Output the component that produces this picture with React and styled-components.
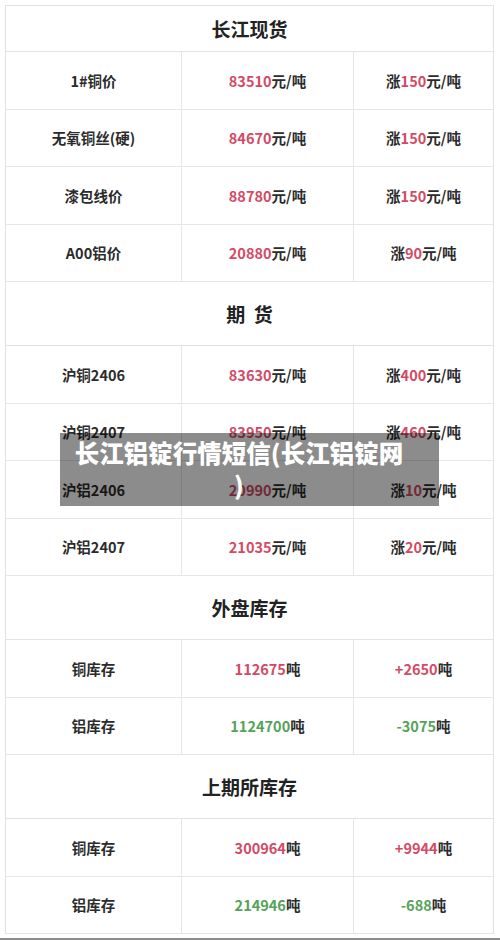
import React from 'react';
import styled, { createGlobalStyle } from 'styled-components';

const GlobalStyle = createGlobalStyle`
  html, body {
    margin: 0;
    padding: 0;
    background: #fff;
  }
  body {
    font-family: "Noto Sans CJK SC", "Noto Sans", sans-serif;
  }
  *, *::before, *::after {
    box-sizing: border-box;
  }
`;

const RED = '#d24b66';
const GREEN = '#55a35a';

const Page = styled.div`
  position: relative;
  width: 500px;
  height: 940px;
  padding: 5px 6px 0 5px;
  border-bottom: 2px solid #8c8c8c;
  background: #fff;
`;

const Table = styled.div`
  border: 1px solid #e2e2e2;
  border-bottom: none;
  color: #2b2b2b;
`;

const SectionTitle = styled.div`
  height: ${(p) => p.$h}px;
  display: flex;
  align-items: center;
  justify-content: center;
  border-bottom: 1px solid #e2e2e2;
  font-size: 19px;
  font-weight: 700;
  color: #222;
  white-space: pre;
`;

const Row = styled.div`
  display: grid;
  grid-template-columns: 175px 172px 1fr;
  height: 57.5px;
  border-bottom: 1px solid #e6e6e6;
`;

const Cell = styled.div`
  display: flex;
  align-items: center;
  justify-content: center;
  font-size: 14.5px;
  font-weight: 700;
  color: #2b2b2b;
  border-left: ${(p) => (p.$first ? 'none' : '1px solid #e6e6e6')};
`;

const Num = styled.span`
  color: ${(p) => p.$color};
`;

const Banner = styled.div`
  position: absolute;
  left: 60px;
  top: 433px;
  width: 379px;
  padding: 4px 34px 5px 13px;
  background: rgba(0, 0, 0, 0.45);
  color: #fff;
  font-size: 24.5px;
  font-weight: 900;
  line-height: 32px;
  text-align: center;
  white-space: nowrap;
`;

const sections = [
  {
    title: '长江现货',
    h: 46,
    rows: [
      ['1#铜价', '83510', '元/吨', '涨', '150', '元/吨'],
      ['无氧铜丝(硬)', '84670', '元/吨', '涨', '150', '元/吨'],
      ['漆包线价', '88780', '元/吨', '涨', '150', '元/吨'],
      ['A00铝价', '20880', '元/吨', '涨', '90', '元/吨'],
    ],
  },
  {
    title: '期  货',
    h: 64,
    rows: [
      ['沪铜2406', '83630', '元/吨', '涨', '400', '元/吨'],
      ['沪铜2407', '83950', '元/吨', '涨', '460', '元/吨'],
      ['沪铝2406', '20990', '元/吨', '涨', '10', '元/吨'],
      ['沪铝2407', '21035', '元/吨', '涨', '20', '元/吨'],
    ],
  },
  {
    title: '外盘库存',
    h: 64,
    rows: [
      ['铜库存', '112675', '吨', '', '+2650', '吨', RED],
      ['铝库存', '1124700', '吨', '', '-3075', '吨', GREEN],
    ],
  },
  {
    title: '上期所库存',
    h: 64,
    rows: [
      ['铜库存', '300964', '吨', '', '+9944', '吨', RED],
      ['铝库存', '214946', '吨', '', '-688', '吨', GREEN],
    ],
  },
];

export default function App() {
  return (
    <>
      <GlobalStyle />
      <Page>
        <Table>
          {sections.map((s) => (
            <React.Fragment key={s.title}>
              <SectionTitle $h={s.h}>{s.title}</SectionTitle>
              {s.rows.map((r) => {
                const color = r[6] || RED;
                return (
                  <Row key={s.title + r[0]}>
                    <Cell $first>{r[0]}</Cell>
                    <Cell>
                      <Num $color={color}>{r[1]}</Num>
                      {r[2]}
                    </Cell>
                    <Cell>
                      {r[3]}
                      <Num $color={color}>{r[4]}</Num>
                      {r[5]}
                    </Cell>
                  </Row>
                );
              })}
            </React.Fragment>
          ))}
        </Table>
        <Banner>
          长江铝锭行情短信(长江铝锭网
          <br />)
        </Banner>
      </Page>
    </>
  );
}
